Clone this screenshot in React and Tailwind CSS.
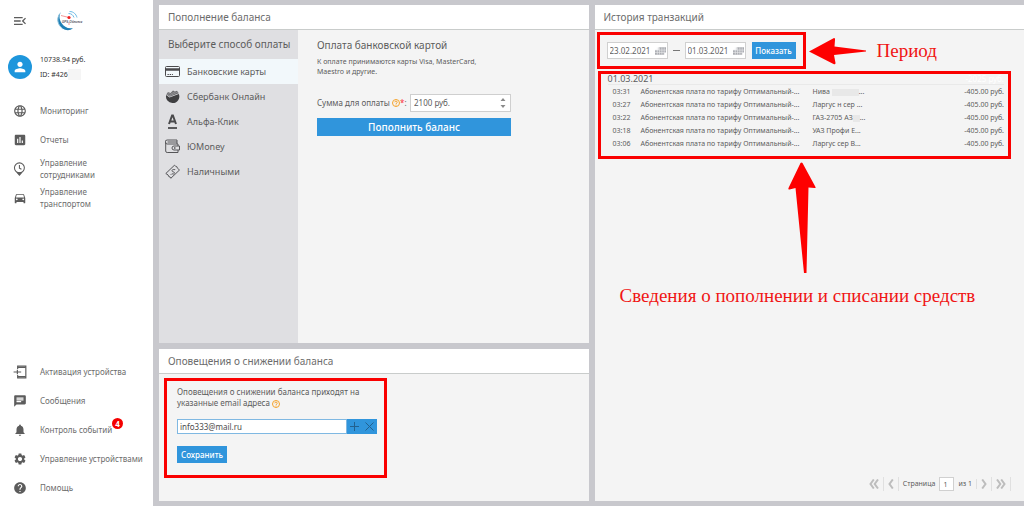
import React from "react";
import {
  MdMenuOpen,
  MdPerson,
  MdLanguage,
  MdPoll,
  MdDirectionsCar,
  MdChat,
  MdNotifications,
  MdSettings,
  MdHelp,
} from "react-icons/md";

function Logo() {
  return (
    <svg className="h-6 w-8" viewBox="0 0 32 24" fill="none" aria-label="Логотип">
      <path d="M7 3C2 8 3 15 8 19c4 3 8 3 11 0-5 1-9-1-11.500-5C5 10 5 6 7 3Z" fill="#1f7fb5" />
      <path d="M5.500 5C2.500 10 3.500 16 9 20" stroke="#8fc4de" strokeWidth="1" />
      <path d="M15.500 2.500c4 0 6.500 2.500 7.500 6M14.500 4.500c3 0 4.500 1.500 5.500 4" stroke="#6dbbe6" strokeWidth="1" />
      <path d="M7 6.500l8 2M15 14v2" stroke="#f08080" strokeWidth="0.800" />
      <circle cx="15" cy="8.500" r="1.600" fill="#f02020" />
      <text x="8" y="13.500" fontSize="3" fontStyle="italic" fontWeight="700" fill="#556" fontFamily="Liberation Sans, sans-serif">GPS-Обнинск</text>
    </svg>
  );
}

function PinClockIcon({ className }) {
  return (
    <svg className={className} viewBox="0 0 24 24" fill="none" stroke="currentColor" strokeWidth="1.800">
      <circle cx="11" cy="10" r="8.500" />
      <path d="M11 5v5.500l3.500 2" />
      <path d="M6.500 17.500 11 22.500l4.500-5" fill="currentColor" />
    </svg>
  );
}

function ActivateIcon({ className }) {
  return (
    <svg className={className} viewBox="0 0 24 24" fill="none" stroke="currentColor" strokeWidth="2">
      <path d="M8 7V2h14v20H8v-5" />
      <path d="M8 4h14M8 20h14" strokeWidth="2" />
      <path d="M1 12h13M7.500 8v8" />
    </svg>
  );
}

function CardIcon() {
  return (
    <svg className="h-4 w-4" viewBox="0 0 16 16" fill="none" stroke="#4a4a4c" aria-hidden="true">
      <rect x="0.500" y="2.500" width="14" height="10" rx="1" />
      <path d="M0.500 5.500h14" strokeWidth="2.500" />
      <path d="M2.500 10.500h1.300M4.700 10.500h1.300M6.900 10.500h1" />
    </svg>
  );
}

function SberIcon() {
  return (
    <svg className="h-4 w-4" viewBox="0 0 16 16" aria-hidden="true">
      <path d="M1.200 6 4.500 8.500 13.800 5A6.400 6.400 0 0 1 7.500 14 6.400 6.400 0 0 1 1.200 6Z" fill="#3f3f41" />
      <path d="M1.300 5.500 3 3l2.500 1L8 1.500l2 1 2-.8 1.800 2.600L4.800 7.800Z" fill="#6a6a6d" />
      <path d="M2 5l3 1.800 8-4M3 3.800l2.300 1.500L10 2.800" stroke="#b0b0b4" strokeWidth="0.500" fill="none" />
    </svg>
  );
}

function AlfaIcon() {
  return (
    <svg className="h-4 w-4" viewBox="0 0 16 16" fill="none" stroke="#4a4a4c" aria-hidden="true">
      <path d="M4 10 7.100 1.500h.8L11 10M5 7.500h5" strokeWidth="2" />
      <path d="M3 14h9" strokeWidth="1.800" />
    </svg>
  );
}

function WalletIcon() {
  return (
    <svg className="h-4 w-4" viewBox="0 0 16 16" fill="none" stroke="#555558" aria-hidden="true">
      <path d="M0.700 3v9a1.500 1.500 0 0 0 1.500 1.500H13V5H2.200a1.500 1.500 0 0 1 0-4H12V5" />
      <path d="M2.500 3H12" />
      <path d="M14.500 7H9a2 2 0 0 0 0 4h5.500Z" fill="#e0e0e3" />
      <path d="M9 9h1.500" strokeWidth="1.500" />
    </svg>
  );
}

function CashIcon() {
  return (
    <svg className="h-4 w-4" viewBox="0 0 16 16" fill="none" stroke="#555558" aria-hidden="true">
      <path d="M0.800 9.500 9.500 1.200q1 1.500 2.200 1.300 0 1.500 2.800 3.500l-8.700 8.300q-.5-1.800-2-1.700 0-1.800-3-3.100Z" />
      <path d="M9.300 5.800C8 5 6.500 6 7.200 7.200c.6 1 1.800.3 2.200 1.400.3 1.200-1.400 2-2.400 1M5.800 10.800l.8-1M9.300 6l.8-1" />
    </svg>
  );
}

function HelpMark() {
  return (
    <svg className="inline-block h-2 w-2" viewBox="0 0 16 16" fill="none" stroke="#f5a32c" strokeWidth="2" aria-label="Подсказка">
      <circle cx="8" cy="8" r="7" />
      <path d="M5.500 6.500c0-3 5-3 5 0C10.500 8 8 8 8 10M8 11v2" />
    </svg>
  );
}

function CalendarIcon() {
  return (
    <svg className="h-2 w-[11px] shrink-0" viewBox="0 0 12 8" aria-hidden="true">
      <path d="M4 0h8v6h-2v2H0V3h4Z" fill="#a9abb0" />
      <path d="M0 3h12M0 5.500h12M2.500 0v8M5 0v8M7.500 0v8M10 0v8" stroke="#ececee" strokeWidth="0.700" />
    </svg>
  );
}

function NavItem({ icon, children, badge }) {
  return (
    <a href="#" className="flex h-[29px] items-center text-[8px] leading-3 text-[#6c6c6c]">
      <span className="flex w-10 shrink-0 pl-[13px] text-[#5c5c5c]">{icon}</span>
      <span>{children}</span>
      {badge && (
        <span className="mb-3 flex h-[11px] w-[11px] shrink-0 items-center justify-center rounded-full bg-[#f40000] text-[8px] leading-none font-bold text-white">
          {badge}
        </span>
      )}
    </a>
  );
}

function PanelTitle({ children }) {
  return (
    <h2 className="h-[25px] shrink-0 border-b border-[#c9cccb] bg-white px-[9px] text-[10px] leading-6 text-[#6c6c6c]">
      {children}
    </h2>
  );
}

function DateField({ label, value }) {
  return (
    <label className="flex h-[17px] w-[61px] items-center border border-[#d0d0d0] bg-white pr-px pl-[2px]">
      <input aria-label={label} defaultValue={value} className="w-0 min-w-0 flex-1 bg-transparent text-[8px] text-[#5f5f5f] outline-none" />
      <CalendarIcon />
    </label>
  );
}

const methods = [
  ["Банковские карты", CardIcon],
  ["Сбербанк Онлайн", SberIcon],
  ["Альфа-Клик", AlfaIcon],
  ["ЮMoney", WalletIcon],
  ["Наличными", CashIcon],
];

const smudge = <span className="inline-block h-[7px] w-[27px] bg-[#e8e8e8] align-middle" />;
const smallSmudge = <span className="inline-block h-[7px] w-[7px] bg-[#e8e8e8] align-middle" />;

const transactions = [
  ["03:31", <>Нива {smudge}...</>],
  ["03:27", "Ларгус н сер ..."],
  ["03:22", <>ГАЗ-2705 АЗ{smallSmudge}...</>],
  ["03:18", "УАЗ Профи Е..."],
  ["03:06", "Ларгус сер В..."],
];

function Sidebar() {
  const icon = "h-[14px] w-[14px]";
  return (
    <aside className="flex w-[153px] shrink-0 flex-col bg-white pb-1">
      <div className="flex items-center gap-[26px] pt-[9px] pl-[12px]">
        <button aria-label="Свернуть меню" className="text-[#5c5c5c]">
          <MdMenuOpen className="h-4 w-4" />
        </button>
        <Logo />
      </div>
      <div className="mt-[19px] flex items-center gap-2 pl-2 text-[7px] leading-[15px] text-[#333]">
        <span className="flex h-6 w-6 items-center justify-center rounded-full bg-[#1e96dc] text-white">
          <MdPerson className="h-4 w-4" />
        </span>
        <div>
          <p>10738.94 руб.</p>
          <p className="flex items-center">ID: #426<span className="h-[11px] w-[13px] bg-[#f5f5f5]" /></p>
        </div>
      </div>
      <nav className="mt-[14px]" aria-label="Основное меню">
        <NavItem icon={<MdLanguage className={icon} />}>Мониторинг</NavItem>
        <NavItem icon={<MdPoll className={icon} />}>Отчеты</NavItem>
        <NavItem icon={<PinClockIcon className={icon} />}>Управление<br />сотрудниками</NavItem>
        <NavItem icon={<MdDirectionsCar className={icon} />}>Управление<br />транспортом</NavItem>
      </nav>
      <nav className="mt-auto" aria-label="Сервис">
        <NavItem icon={<ActivateIcon className={icon} />}>Активация устройства</NavItem>
        <NavItem icon={<MdChat className={icon} />}>Сообщения</NavItem>
        <NavItem icon={<MdNotifications className={icon} />} badge="4">Контроль событий</NavItem>
        <NavItem icon={<MdSettings className={icon} />}>Управление устройствами</NavItem>
        <NavItem icon={<MdHelp className={icon} />}>Помощь</NavItem>
      </nav>
    </aside>
  );
}

function TopUpPanel() {
  return (
    <section className="flex flex-1 flex-col bg-[#f4f4f4]">
      <PanelTitle>Пополнение баланса</PanelTitle>
      <div className="flex flex-1">
        <div className="w-[139px] shrink-0 bg-[#dfdfe2]">
          <h3 className="h-[29px] px-[9px] text-[10px] leading-[29px] whitespace-nowrap text-[#5c5c5c]">Выберите способ оплаты</h3>
          {methods.map(([name, Icon], i) => (
            <button
              key={name}
              className={`flex h-[25px] w-full items-center gap-[6px] pl-[6px] text-[9px] text-[#5c5c5c] ${i === 0 ? "bg-[#f2f8fb]" : ""}`}
            >
              <Icon />
              {name}
            </button>
          ))}
        </div>
        <div className="pt-[6px] pl-[19px] text-[#5c5c5c]">
          <h3 className="text-[10px] leading-[18px]">Оплата банковской картой</h3>
          <p className="mt-[3px] text-[7px] leading-[10px]">
            К оплате принимаются карты Visa, MasterCard,<br />Maestro и другие.
          </p>
          <div className="mt-[17px] flex w-[194px] items-center justify-between text-[8px]">
            <label htmlFor="amount" className="flex items-center whitespace-nowrap">
              Сумма для оплаты&nbsp;<HelpMark /><span className="text-red-500">*</span>:
            </label>
            <div className="flex h-[18px] w-[101px] items-center border border-[#cfcfcf] bg-white px-[3px]">
              <input id="amount" defaultValue="2100 руб." className="w-0 flex-1 text-[8px] outline-none" />
              <svg className="h-3 w-2" viewBox="0 0 8 12" fill="#8a8a8a" aria-hidden="true">
                <path d="M4 1 6.500 4h-5ZM4 11 6.500 8h-5Z" />
              </svg>
            </div>
          </div>
          <button className="mt-[6px] flex h-[18px] w-[194px] items-center justify-center bg-[#3095dc] text-[10px] font-medium text-white">
            Пополнить баланс
          </button>
        </div>
      </div>
    </section>
  );
}

function AlertsPanel() {
  return (
    <section className="flex h-[152px] shrink-0 flex-col bg-[#f4f4f4]">
      <PanelTitle>Оповещения о снижении баланса</PanelTitle>
      <div className="mt-1 ml-[5px] h-[100px] w-[223px] border-[3px] border-[#fa0000] pt-[5px] pl-[10px] text-[#5c5c5c]">
        <label htmlFor="email" className="block text-[8px] leading-[11px] whitespace-nowrap">
          Оповещения о снижении баланса приходят на<br />указанные email адреса <HelpMark />
        </label>
        <div className="mt-[11px] flex h-[15px] w-[200px] bg-[#3095dc] text-[#22618f]">
          <input id="email" defaultValue="info333@mail.ru" className="w-0 flex-1 border border-[#7fb8e2] bg-white px-[2px] text-[8px] text-[#4c4c4c] outline-none" />
          <button aria-label="Добавить" className="flex w-[15px] items-center justify-center">
            <svg className="h-[9px] w-[9px]" viewBox="0 0 9 9" stroke="currentColor" strokeWidth="1"><path d="M4.500 0v9M0 4.500h9" /></svg>
          </button>
          <button aria-label="Удалить" className="flex w-[15px] items-center justify-center">
            <svg className="h-[9px] w-[9px]" viewBox="0 0 9 9" stroke="currentColor" strokeWidth="1"><path d="M.5.500l8 8M8.500.500l-8 8" /></svg>
          </button>
        </div>
        <button className="mt-3 flex h-[17px] w-[50px] items-center justify-center bg-[#3095dc] text-[8px] font-medium text-white">Сохранить</button>
      </div>
    </section>
  );
}

function PageArrow({ label, double, flip }) {
  return (
    <button aria-label={label} className="flex h-[14px] items-center border-r border-[#e0e0e0] px-1">
      <svg className={`h-[10px] ${double ? "w-[10px]" : "w-[6px]"} ${flip ? "rotate-180" : ""}`} viewBox={double ? "0 0 10 10" : "0 0 6 10"} fill="none" stroke="#bdbdbd" strokeWidth="2">
        <path d="M4.800.500 1.500 5l3.300 4.500" />
        {double && <path d="M9 .5 5.700 5 9 9.500" />}
      </svg>
    </button>
  );
}

function HistoryPanel() {
  return (
    <section className="flex min-w-0 flex-1 flex-col bg-[#f4f4f4]">
      <PanelTitle>История транзакций</PanelTitle>
      <div className="mt-[2px] ml-[2px] flex items-center">
        <div className="flex h-[37px] w-[209px] items-center border-[3px] border-[#fa0000] pl-[7px]">
          <DateField label="Начало периода" value="23.02.2021" />
          <span className="mx-[5px] h-px w-[7px] bg-[#777]" />
          <DateField label="Конец периода" value="01.03.2021" />
          <button className="ml-[6px] flex h-[17px] w-[44px] items-center justify-center bg-[#3095dc] text-[8px] font-medium text-white">Показать</button>
        </div>
        <svg className="ml-[3px] h-[28px] w-[58px]" viewBox="0 0 58 28" fill="#fe0000" aria-hidden="true">
          <path d="M0 14.500 25 1Q26.500 1 26 3L25.500 9.500 57 13.500v1L25 18l1.500 8q0 2-2 1Z" />
        </svg>
        <span className="ml-[10px] font-[Liberation_Serif,serif] text-[19px] leading-6 text-[#f01515]">Период</span>
      </div>
      <div className="mt-[2px] mr-[13px] ml-[3px] h-[88px] border-[3px] border-[#fa0000] pr-[4px] pl-[7px] text-[#5c5c5c]">
        <div className="flex h-[11px] items-center justify-between border-b border-[#e9e9e9] text-[9px] leading-[10px]">
          <h3>01.03.2021</h3>
          <span className="text-[8px] text-white">-2025 руб.</span>
        </div>
        <table className="w-full table-fixed text-left text-[7px] leading-[13px]">
          <colgroup>
            <col className="w-[33px]" />
            <col className="w-[172px]" />
            <col />
            <col className="w-[60px]" />
          </colgroup>
          <tbody>
            {transactions.map(([time, car]) => (
              <tr key={time} className="h-[13px] whitespace-nowrap">
                <td className="pl-[5px]">{time}</td>
                <td>Абонентская плата по тарифу Оптимальный-...</td>
                <td>{car}</td>
                <td className="text-right">-405.00 руб.</td>
              </tr>
            ))}
          </tbody>
        </table>
      </div>
      <svg className="mt-[3px] ml-[193px] h-[112px] w-[28px]" viewBox="0 0 28 112" fill="#fe0000" aria-hidden="true">
        <path d="M12.500 1q1-1 2 0L27.500 25q.5 1-1 1l-6-.5L18.500 111h-2.500L7.500 26l-6 1.500q-1.500 0-1-1.500Z" />
      </svg>
      <p className="mt-2 ml-[25px] font-[Liberation_Serif,serif] text-[19px] leading-[28px] text-[#f01515]">
        Сведения о пополнении и списании средств
      </p>
      <div className="mt-auto mr-[13px] mb-[10px] flex items-center justify-end text-[7px] text-[#5c5c5c]">
        <PageArrow label="Первая страница" double />
        <PageArrow label="Предыдущая страница" />
        <label htmlFor="page" className="px-1">Страница</label>
        <input id="page" defaultValue="1" className="h-[14px] w-[15px] border border-[#d0d0d0] bg-white px-[3px] outline-none" />
        <span className="border-r border-[#e0e0e0] px-1">из 1</span>
        <PageArrow label="Следующая страница" flip />
        <PageArrow label="Последняя страница" double flip />
      </div>
    </section>
  );
}

export default function App() {
  return (
    <div className="flex min-h-screen bg-[#c8c8cd] font-[Noto_Sans,sans-serif]">
      <Sidebar />
      <main className="flex min-w-0 flex-1 gap-[6px] pt-[5px] pb-[5px] pl-[6px]">
        <div className="flex min-w-0 flex-1 flex-col gap-[6px]">
          <TopUpPanel />
          <AlertsPanel />
        </div>
        <HistoryPanel />
      </main>
    </div>
  );
}
